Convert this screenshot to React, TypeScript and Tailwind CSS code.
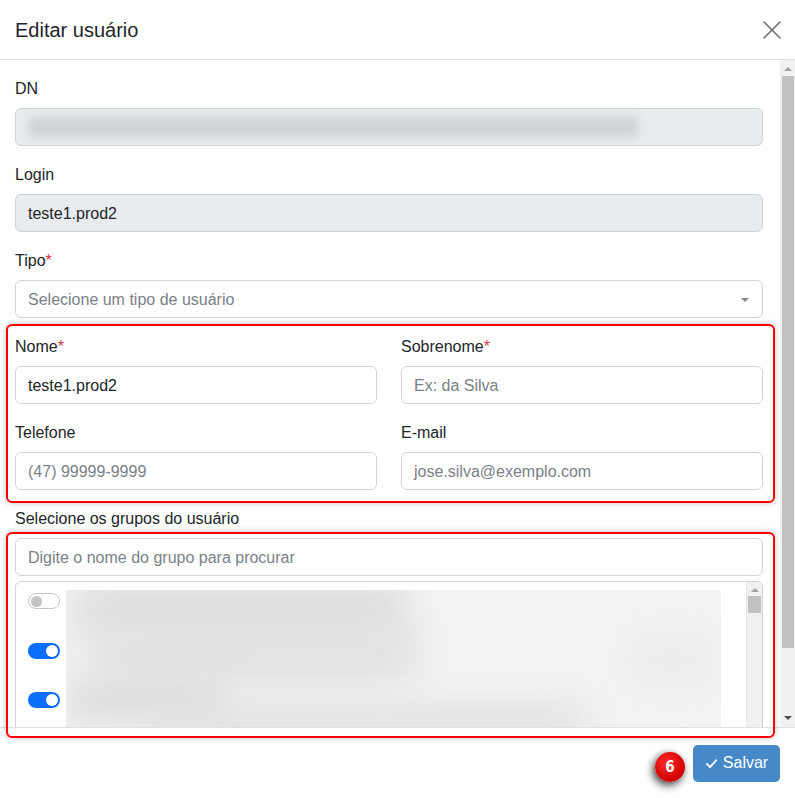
import React from "react";

const font = { fontFamily: '"Liberation Sans", Arial, sans-serif' };

function Label({ text, req }: { text: string; req?: boolean }) {
  return (
    <div className="h-[24px] leading-[26px] text-[16px] text-[#212529] mb-[8px]">
      {text}
      {req && <span className="text-[#dc3545]">*</span>}
    </div>
  );
}

function Input({ value, placeholder, disabled }: { value?: string; placeholder?: string; disabled?: boolean }) {
  return (
    <div
      className={`h-[38px] rounded-[6px] border border-[#ced4da] px-[12px] flex items-center text-[16px] pt-[1px] ${
        disabled ? "bg-[#e9ecef]" : "bg-white"
      } ${value ? "text-[#212529]" : "text-[#7a8188]"}`}
    >
      {value || placeholder}
    </div>
  );
}

function Toggle({ on }: { on: boolean }) {
  return on ? (
    <div className="w-[32px] h-[16px] rounded-full bg-[#0d6efd] flex items-center justify-end pr-[2px]">
      <div className="w-[12px] h-[12px] rounded-full bg-white" />
    </div>
  ) : (
    <div className="w-[32px] h-[16px] rounded-full border border-[#c4c4c4] bg-white flex items-center pl-[2px]">
      <div className="w-[11px] h-[11px] rounded-full bg-[#c4c4c4]" />
    </div>
  );
}

function UpArrow() {
  return <div className="w-0 h-0 border-l-[4px] border-r-[4px] border-b-[4px] border-l-transparent border-r-transparent border-b-[#a3a3a3]" />;
}
function DownArrow() {
  return <div className="w-0 h-0 border-l-[4px] border-r-[4px] border-t-[4px] border-l-transparent border-r-transparent border-t-[#505050]" />;
}

export default function App() {
  return (
    <div className="relative w-[795px] h-[798px] overflow-hidden bg-white flex flex-col" style={font}>
      {/* Header */}
      <div className="h-[60px] shrink-0 border-b border-[#dee2e6] flex items-center justify-between pl-[15px] pr-[12px]">
        <div className="text-[20px] text-[#212529] leading-[24px]">Editar usuário</div>
        <svg width="22" height="22" viewBox="0 0 22 22" fill="none" stroke="#6e6e6e" strokeWidth="1.6" strokeLinecap="round">
          <path d="M3 3L19 19M19 3L3 19" />
        </svg>
      </div>

      {/* Body */}
      <div className="h-[667px] shrink-0 flex overflow-hidden">
        <div className="flex-1 pl-[15px] pr-[17px] pt-[16px] overflow-hidden">
          <Label text="DN" />
          <div className="relative h-[38px] rounded-[6px] border border-[#ced4da] bg-[#e9ecef] overflow-hidden">
            <div className="absolute left-[12px] top-[8px] w-[610px] h-[20px] bg-[#cfd2d5] blur-[5px] rounded" />
          </div>

          <div className="mt-[16px]">
            <Label text="Login" />
            <Input value="teste1.prod2" disabled />
          </div>

          <div className="mt-[16px]">
            <Label text="Tipo" req />
            <div className="h-[38px] rounded-[6px] border border-[#ced4da] bg-white px-[12px] pt-[1px] flex items-center justify-between text-[16px] text-[#7a8188]">
              <span>Selecione um tipo de usuário</span>
              <div className="w-0 h-0 border-l-[4px] border-r-[4px] border-t-[4px] border-l-transparent border-r-transparent border-t-[#8a8a8a] mr-[1px]" />
            </div>
          </div>

          <div className="mt-[16px] grid grid-cols-2 gap-x-[24px] gap-y-[16px]">
            <div>
              <Label text="Nome" req />
              <Input value="teste1.prod2" />
            </div>
            <div>
              <Label text="Sobrenome" req />
              <Input placeholder="Ex: da Silva" />
            </div>
            <div>
              <Label text="Telefone" />
              <Input placeholder="(47) 99999-9999" />
            </div>
            <div>
              <Label text="E-mail" />
              <Input placeholder="jose.silva@exemplo.com" />
            </div>
          </div>

          <div className="mt-[16px]">
            <Label text="Selecione os grupos do usuário" />
            <Input placeholder="Digite o nome do grupo para procurar" />
            <div className="mt-[5px] h-[220px] rounded-t-[6px] border border-[#ced4da] flex overflow-hidden">
              <div className="flex-1 flex pl-[12px] pt-[8px]">
                <div className="w-[38px] shrink-0 flex flex-col pt-[2px]">
                  <div className="h-[50px] pt-[1px]"><Toggle on={false} /></div>
                  <div className="h-[49px] pt-[1px]"><Toggle on /></div>
                  <div className="h-[50px] pt-[1px]"><Toggle on /></div>
                </div>
                <div className="relative w-[655px] h-[220px] bg-[#f3f3f3] overflow-hidden">
                  <div className="absolute left-[10px] top-[-10px] w-[330px] h-[60px] bg-[#dedede] blur-[18px]" />
                  <div className="absolute left-[30px] top-[40px] w-[320px] h-[50px] bg-[#e0e0e0] blur-[18px]" />
                  <div className="absolute left-[0px] top-[90px] w-[160px] h-[40px] bg-[#dcdcdc] blur-[16px]" />
                  <div className="absolute left-[80px] top-[115px] w-[440px] h-[40px] bg-[#e1e1e1] blur-[18px]" />
                  <div className="absolute left-[560px] top-[40px] w-[90px] h-[60px] bg-[#ececec] blur-[18px]" />
                </div>
              </div>
              <div className="w-[16px] shrink-0 bg-[#f1f1f1] border-l border-[#e6e6e6] flex flex-col items-center pt-[6px]">
                <UpArrow />
                <div className="mt-[4px] w-[13px] h-[17px] bg-[#c1c1c1]" />
              </div>
            </div>
          </div>
        </div>

        {/* outer scrollbar */}
        <div className="w-[15px] shrink-0 bg-[#f1f1f1] flex flex-col items-center pt-[7px] pb-[7px]">
          <UpArrow />
          <div className="mt-[5px] w-[12px] h-[572px] bg-[#c1c1c1]" />
          <div className="flex-1" />
          <DownArrow />
        </div>
      </div>

      {/* Footer */}
      <div className="flex-1 border-t border-[#dee2e6] flex items-center justify-end pr-[15px]">
        <div className="h-[37px] w-[87px] rounded-[5px] bg-[#4589c8] text-white text-[16px] flex items-center justify-center gap-[5px]">
          <svg width="13" height="13" viewBox="0 0 14 14" fill="none" stroke="white" strokeWidth="2" strokeLinecap="round" strokeLinejoin="round">
            <path d="M2 7.5L5.5 11L12 3.5" />
          </svg>
          <span>Salvar</span>
        </div>
      </div>

      {/* Annotation overlays */}
      <div className="absolute left-[6px] top-[324px] w-[769px] h-[179px] rounded-[6px] border-2 border-[#ff0000] shadow-[0_0_6px_rgba(0,0,0,0.25)] pointer-events-none" />
      <div className="absolute left-[6px] top-[532px] w-[769px] h-[206px] rounded-[6px] border-2 border-[#ff0000] shadow-[0_0_6px_rgba(0,0,0,0.25)] pointer-events-none" />
      <div
        className="absolute left-[655px] top-[752px] w-[30px] h-[30px] rounded-full bg-[radial-gradient(circle_at_40%_35%,#ff2a2a,#d00000_70%,#a00000)] shadow-[-2px_3px_8px_rgba(0,0,0,0.8)] flex items-center justify-center text-white text-[15px] font-bold"
        style={{ fontFamily: '"DejaVu Sans Condensed", "Liberation Sans Narrow", sans-serif' }}
      >
        6
      </div>
    </div>
  );
}
